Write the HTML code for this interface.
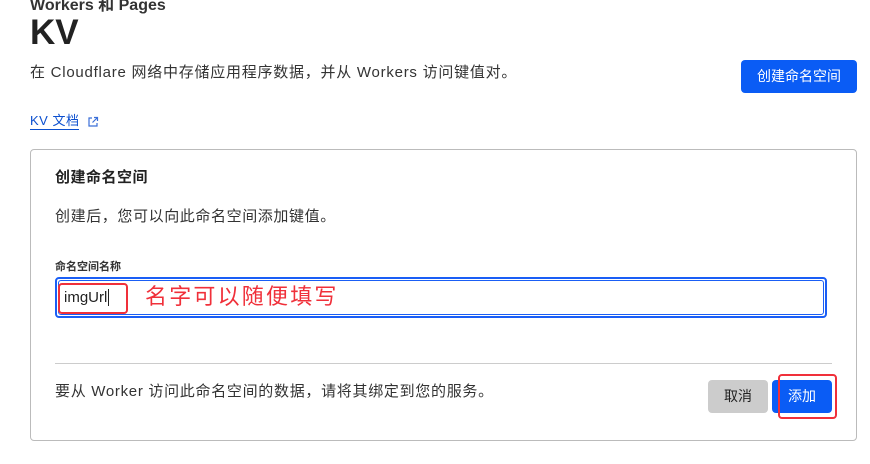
<!DOCTYPE html>
<html><head><meta charset="utf-8"><style>
*{margin:0;padding:0;box-sizing:border-box}
body{width:870px;height:464px;background:#fff;font-family:"Liberation Sans","Noto Sans CJK SC",sans-serif;color:#222;position:relative;overflow:hidden}
.a{position:absolute;white-space:nowrap}
</style></head><body>
<div class="a" style="left:30px;top:-9px;font-size:16px;font-weight:bold;color:#333">Workers 和 Pages</div>
<div class="a" style="left:30px;top:13px;font-size:35px;font-weight:bold;color:#222">KV</div>
<div class="a" style="left:30px;top:61px;font-size:15px;color:#333;letter-spacing:0.75px">在 Cloudflare 网络中存储应用程序数据，并从 Workers 访问键值对。</div>
<div class="a" style="left:741px;top:60px;width:116px;height:33px;background:#0a5cf5;border-radius:4px;color:#fff;font-size:14px;text-align:center;line-height:33px">创建命名空间</div>
<div class="a" style="left:30px;top:113px;font-size:13px;color:#0b4fcf;border-bottom:1px solid #0b4fcf;line-height:16px;letter-spacing:0.5px">KV 文档</div>
<svg class="a" style="left:87px;top:116px" width="12" height="12" viewBox="0 0 12 12" fill="none" stroke="#3b6fd8" stroke-width="1.2"><path d="M5 2H2v8h8V7M7 1.5h3.5V5M10.5 1.5 5.5 6.5"/></svg>
<div class="a" style="left:30px;top:149px;width:827px;height:292px;border:1px solid #bbb;border-radius:4px"></div>
<div class="a" style="left:55px;top:166px;font-size:15px;font-weight:bold;color:#222;letter-spacing:0.5px">创建命名空间</div>
<div class="a" style="left:55px;top:205px;font-size:15px;color:#333;letter-spacing:0.6px">创建后，您可以向此命名空间添加键值。</div>
<div class="a" style="left:55px;top:258px;font-size:11px;font-weight:bold;color:#333">命名空间名称</div>
<div class="a" style="left:55px;top:277px;width:772px;height:41px;border:2px solid #1a5ef5;border-radius:4px"></div>
<div class="a" style="left:58px;top:280px;width:766px;height:35px;border:1px solid #1a5ef5;border-radius:3px"></div>
<div class="a" style="left:58px;top:283px;width:70px;height:31px;border:2px solid #f0303a;border-radius:4px"></div>
<div class="a" style="left:64px;top:289px;font-size:15px;color:#222">imgUrl<span style="border-left:1px solid #222;margin-left:1px"></span></div>
<div class="a" style="left:145px;top:279px;font-size:22px;color:#f0303a;letter-spacing:2.2px">名字可以随便填写</div>
<div class="a" style="left:55px;top:363px;width:777px;height:1px;background:#ccc"></div>
<div class="a" style="left:55px;top:380px;font-size:15px;color:#333;letter-spacing:0.7px">要从 Worker 访问此命名空间的数据，请将其绑定到您的服务。</div>
<div class="a" style="left:708px;top:380px;width:60px;height:33px;background:#ccc;border-radius:4px;font-size:14px;text-align:center;line-height:33px;color:#222">取消</div>
<div class="a" style="left:772px;top:380px;width:60px;height:33px;background:#0a5cf5;border-radius:4px;font-size:14px;text-align:center;line-height:33px;color:#fff">添加</div>
<div class="a" style="left:778px;top:374px;width:59px;height:45px;border:2px solid #f0303a;border-radius:4px"></div>
</body></html>
